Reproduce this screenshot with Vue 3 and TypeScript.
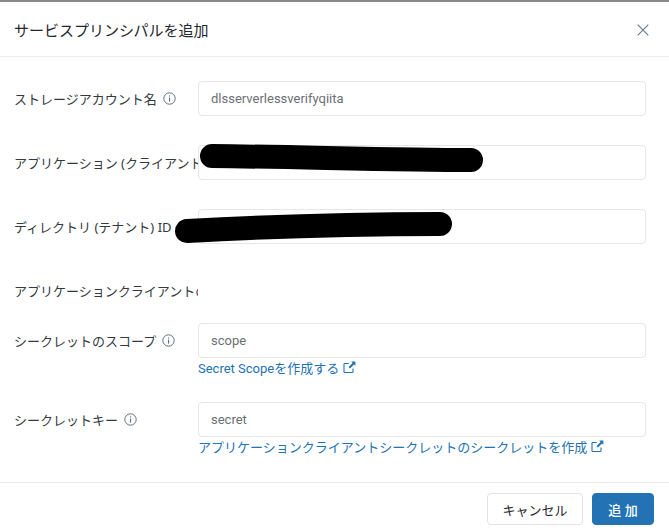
<script setup lang="ts">
interface Field {
  label: string
  value?: string
  info?: boolean
  link?: string
  plain?: boolean
}

const fields: Field[] = [
  { label: 'ストレージアカウント名', value: 'dlsserverlessverifyqiita', info: true },
  { label: 'アプリケーション (クライアント) ID', value: '' },
  { label: 'ディレクトリ (テナント) ID', value: '' },
  { label: 'アプリケーションクライアントのシークレット', plain: true },
  { label: 'シークレットのスコープ', value: 'scope', info: true, link: 'Secret Scopeを作成する' },
  { label: 'シークレットキー', value: 'secret', info: true, link: 'アプリケーションクライアントシークレットのシークレットを作成' },
]
</script>

<template>
  <div class="dialog">
    <header class="head">
      <h1 class="title">サービスプリンシパルを追加</h1>
      <button class="close" aria-label="閉じる">
        <svg width="12" height="12" viewBox="0 0 12 12"><path d="M.7.7l10.6 10.6M11.3.7L.7 11.3" stroke="#5f7a8f" stroke-width="1.1" fill="none"/></svg>
      </button>
    </header>
    <main class="body">
      <div v-for="f in fields" :key="f.label" class="row" :class="{ plain: f.plain, linked: f.link }">
        <div class="label">
          <span class="label-text">{{ f.label }}</span>
          <svg v-if="f.info" class="info" width="13" height="13" viewBox="0 0 13 13">
            <circle cx="6.5" cy="6.5" r="5.7" fill="none" stroke="#5f6f7e" stroke-width="1"/>
            <rect x="6" y="5.6" width="1.1" height="4" fill="#5f6f7e"/>
            <rect x="6" y="3.4" width="1.1" height="1.2" fill="#5f6f7e"/>
          </svg>
        </div>
        <div v-if="!f.plain" class="control">
          <input class="input" :value="f.value" readonly />
          <a v-if="f.link" class="link" href="#">
            {{ f.link }}
            <svg class="ext" width="13" height="13" viewBox="0 0 13 13">
              <path d="M10 7.5v3.2a.8.8 0 0 1-.8.8H1.8a.8.8 0 0 1-.8-.8V3.3a.8.8 0 0 1 .8-.8h4" fill="none" stroke="#2272b4" stroke-width="1.1"/>
              <path d="M8.2.6h4.2v4.2l-1.4-1.4-4 4-1.4-1.4 4-4z" fill="#2272b4"/>
            </svg>
          </a>
        </div>
      </div>
    </main>
    <footer class="foot">
      <button class="btn">キャンセル</button>
      <button class="btn primary">追 加</button>
    </footer>
    <svg class="scribble" width="669" height="530" viewBox="0 0 669 530">
      <path d="M212 156 C 300 157, 400 160, 471 160" stroke="#000" stroke-width="24" stroke-linecap="round" fill="none"/>
      <path d="M187 231 C 260 227, 340 224, 440 224" stroke="#000" stroke-width="24" stroke-linecap="round" fill="none"/>
    </svg>
  </div>
</template>

<style scoped>
.dialog {
  position: relative;
  width: 669px;
  height: 530px;
  box-sizing: border-box;
  border-top: 2px solid #8a8a8a;
  background: #fff;
  font-family: "Noto Sans", "Noto Sans CJK JP", sans-serif;
  font-size: 13px;
  color: #1f272d;
  overflow: hidden;
  display: flex;
  flex-direction: column;
}
.head {
  height: 55px;
  flex: none;
  box-sizing: border-box;
  border-bottom: 1px solid #ebebeb;
  display: flex;
  align-items: center;
  justify-content: space-between;
  padding: 0 20px 0 14px;
}
.title {
  margin: 0;
  font-size: 15px;
  font-weight: 400;
  color: #1f272d;
}
.close {
  border: 0;
  background: none;
  padding: 2px 0 0;
  display: flex;
}
.body {
  flex: 1;
  padding: 24px 23px 0 14px;
}
.row {
  display: flex;
  margin-bottom: 29px;
}
.row.plain {
  margin-bottom: 15px;
  height: 35px;
}
.row.linked {
  margin-bottom: 24px;
}
.label {
  width: 184px;
  height: 34px;
  flex: none;
  display: flex;
  align-items: center;
  gap: 6px;
  white-space: nowrap;
  overflow: hidden;
  color: #33393e;
}
.info { flex: none; }
.control { flex: 1; }
.input {
  display: block;
  width: 100%;
  height: 35px;
  box-sizing: border-box;
  border: 1px solid #e6e6e6;
  border-radius: 4px;
  padding: 0 12px;
  font-family: Roboto, "Noto Sans CJK JP", sans-serif;
  font-size: 13px;
  color: #6b7074;
  background: #fff;
  outline: none;
}
.link {
  display: block;
  height: 20px;
  line-height: 22px;
  font-family: Roboto, "Noto Sans CJK JP", sans-serif;
  color: #2272b4;
  text-decoration: none;
  white-space: nowrap;
}
.ext { vertical-align: -1px; margin-left: 1px; }
.foot {
  height: 48px;
  box-sizing: border-box;
  border-top: 1px solid #ebebeb;
  display: flex;
  justify-content: flex-end;
  gap: 9px;
  padding: 10px 15px 0 0;
  flex: none;
}
.btn {
  height: 32px;
  width: 96px;
  box-sizing: border-box;
  border: 1px solid #e3e3e3;
  border-radius: 4px;
  background: #fff;
  font: inherit;
  color: #1f272d;
  padding: 0;
}
.btn.primary {
  width: 62px;
  border-color: #2272b4;
  background: #2272b4;
  color: #fff;
  font-weight: 500;
}
.scribble {
  position: absolute;
  top: -2px;
  left: 0;
  pointer-events: none;
}
</style>
